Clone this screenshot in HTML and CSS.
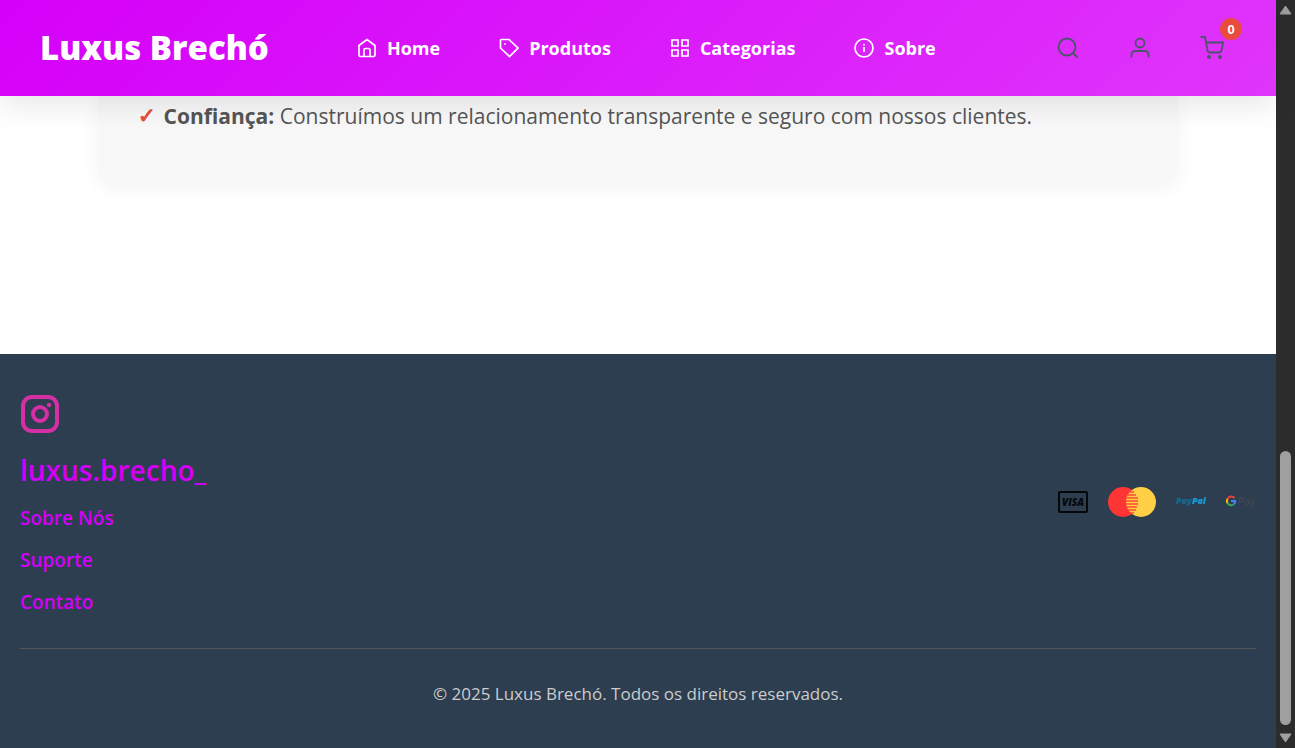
FILE: index.html
```html
<!DOCTYPE html>
<html lang="pt-BR">
<head>
<meta charset="utf-8">
<meta name="viewport" content="width=device-width, initial-scale=1">
<title>Luxus Brechó</title>
<link rel="stylesheet" href="styles.css">
</head>
<body>
<div class="page">
  <header class="header">
    <a class="logo" href="#">Luxus Brechó</a>
    <nav class="nav">
      <a class="nav-link" href="#"><svg class="nav-icon" viewBox="0 0 20 20"><path d="M2 7.500 10 1.500 18 7.500V17Q18 18.500 16.500 18.500H3.500Q2 18.500 2 17ZM7 18.500V12Q7 10.500 8.500 10.500H11.500Q13 10.500 13 12V18.500"/></svg>Home</a>
      <a class="nav-link" href="#"><svg class="nav-icon" viewBox="0 0 20 20"><path d="M1.500 2.500V10L10.500 18.500 19 10 11 2.500Q10.500 1.500 9.500 1.500H2.500Q1.500 1.500 1.500 2.500Z"/><circle class="solid" cx="6" cy="6" r="1"/></svg>Produtos</a>
      <a class="nav-link" href="#"><svg class="nav-icon" viewBox="0 0 20 20"><path d="M2 2H8V8H2ZM12 2H18V8H12ZM2 12H8V18H2ZM12 12H18V18H12Z"/></svg>Categorias</a>
      <a class="nav-link" href="#"><svg class="nav-icon" viewBox="0 0 20 20"><circle cx="10" cy="10" r="9"/><path d="M10 9V14M10 6V7.500"/></svg>Sobre</a>
    </nav>
    <div class="actions">
      <button class="action" type="button" aria-label="Buscar"><svg class="action-icon" viewBox="0 0 24 24"><circle cx="11" cy="11" r="8.500"/><path d="M17 17 21.500 21.500"/></svg></button>
      <button class="action" type="button" aria-label="Conta"><svg class="action-icon" viewBox="0 0 24 24"><circle cx="12" cy="7" r="4.500"/><path d="M3.500 21.500V19Q3.500 15 7.500 15H16.500Q20.500 15 20.500 19V21.500"/></svg></button>
      <button class="action" type="button" aria-label="Carrinho"><svg class="action-icon" viewBox="0 0 24 24"><path d="M.5 1H5L7.500 14.500Q7.800 16.500 10 16.500H19Q21 16.500 21.500 14.500L23 6.500H6"/><circle class="dot" cx="9" cy="21" r="2"/><circle class="dot" cx="20" cy="21" r="2"/></svg><span class="badge">0</span></button>
    </div>
  </header>
  <main class="main">
    <section class="card">
      <ul class="values"><li class="value"><span class="check">✓</span><p class="value-text"><strong>Confiança:</strong> Construímos um relacionamento transparente e seguro com nossos clientes.</p></li></ul>
    </section>
  </main>
  <footer class="footer">
    <div class="footer-top">
      <div class="footer-links">
        <a class="instagram" href="#"><svg class="instagram-icon" viewBox="0 0 40 40"><rect x="3" y="3" width="34" height="34" rx="9"/><circle cx="20" cy="20" r="7"/><circle class="lens" cx="29" cy="11" r="2.200"/></svg><span>luxus.brecho_</span></a>
        <a class="footer-link" href="#">Sobre Nós</a>
        <a class="footer-link" href="#">Suporte</a>
        <a class="footer-link" href="#">Contato</a>
      </div>
      <div class="payments">
        <svg class="pay" viewBox="0 0 30 30" role="img" aria-label="Visa"><rect x="1" y="5" width="28" height="20" rx="1" fill="none" stroke="#050709" stroke-width="2"/><text class="visa" x="15" y="19" text-anchor="middle">VISA</text></svg>
        <svg class="pay-wide" viewBox="0 0 48 30" role="img" aria-label="Mastercard"><circle cx="15" cy="15" r="15" fill="#ff3434"/><circle cx="33" cy="15" r="15" fill="#ffcf45"/><path d="M22 5H26M20 8H28M19 11H30M18 14H30M18 17H30M19 20H29M20 23H28M22 26H26" stroke="#ff4a34" stroke-width="1.500"/></svg>
        <svg class="pay" viewBox="0 0 30 30" role="img" aria-label="PayPal"><text class="paypal" x="0" y="17"><tspan fill="#146990">Pay</tspan><tspan fill="#189bd0">Pal</tspan></text></svg>
        <svg class="pay" viewBox="0 0 30 30" role="img" aria-label="Google Pay"><g fill="none" stroke-width="2"><path d="M8.500 11A4.200 4.200 0 0 0 1.500 12" stroke="#ea4335"/><path d="M1.500 12A4.200 4.200 0 0 0 1.500 16" stroke="#fbbc04"/><path d="M1.500 16A4.200 4.200 0 0 0 7.500 17.500" stroke="#34a853"/><path d="M7.500 17.500Q9.500 16 9.200 14H5" stroke="#4285f4"/></g><text class="gpay" x="12" y="18">Pay</text></svg>
      </div>
    </div>
    <p class="copyright">© 2025 Luxus Brechó. Todos os direitos reservados.</p>
  </footer>
</div>
<div class="scrollbar" aria-hidden="true">
  <svg class="arrow" viewBox="0 0 13 10"><path d="M6.500 1 12 9H1Z"/></svg>
  <div class="track"><div class="thumb"></div></div>
  <svg class="arrow" viewBox="0 0 13 10"><path d="M1 1H12L6.500 9Z"/></svg>
</div>
</body>
</html>
```
FILE: styles.css
```css
* { box-sizing: border-box; }
body {
  margin: 0;
  display: flex;
  min-height: 100vh;
  background: #fff;
  font-family: "Segoe UI", "Open Sans", "Noto Sans", sans-serif;
}
a { text-decoration: none; }
p, ul { margin: 0; padding: 0; }
.page { flex: 1; min-width: 0; display: flex; flex-direction: column; }

.header {
  position: relative;
  z-index: 1;
  display: flex;
  align-items: center;
  padding: 24px 40px;
  background: linear-gradient(135deg, #d500f9, #df35fb);
  box-shadow: 0 8px 32px rgba(0, 0, 0, .1);
}
.logo { color: #fff; font-size: 33px; font-weight: 800; line-height: 48px; white-space: nowrap; }
.nav { display: flex; gap: 59px; margin-left: 88px; }
.nav-link { display: flex; align-items: center; gap: 10px; color: #fff; font-size: 18px; font-weight: 700; line-height: 24px; }
.nav-icon { width: 20px; height: 20px; fill: none; stroke: #fff; stroke-width: 1.7; }
.solid { fill: #fff; stroke: none; }
.actions { display: flex; gap: 24px; margin-left: auto; }
.action {
  position: relative;
  display: grid;
  place-items: center;
  width: 48px;
  height: 48px;
  padding: 0;
  border: 0;
  background: none;
}
.action-icon { width: 24px; height: 24px; fill: none; stroke: #4a5568; stroke-width: 1.8; }
.dot { fill: #4a5568; stroke: none; }
.badge {
  position: absolute;
  top: -6px;
  right: -6px;
  width: 22px;
  height: 22px;
  border-radius: 50%;
  background: #e74c3c;
  color: #fff;
  font-size: 13px;
  font-weight: 700;
  line-height: 24px;
  text-align: center;
}

.main { flex: 1; padding: 0 20px 168px; }
.card {
  max-width: 1080px;
  margin: 0 auto;
  padding: 0 40px 48px;
  border-radius: 0 0 15px 15px;
  background: #f8f8f8;
  box-shadow: 0 4px 20px rgba(0, 0, 0, .05);
}
.values { list-style: none; }
.value { display: flex; gap: 8px; color: #555; font-size: 21px; line-height: 40px; }
.check { color: #e74c3c; font-family: "DejaVu Sans", sans-serif; -webkit-text-stroke: 1px #e74c3c; }

.footer { padding: 40px 20px 41px; background: #2c3e50; }
.footer-top { display: flex; align-items: center; justify-content: space-between; padding-bottom: 32px; }
.footer-links { display: flex; flex-direction: column; align-items: flex-start; gap: 14px; }
.instagram { display: flex; flex-direction: column; gap: 16px; color: #d500f9; font-size: 28px; font-weight: 600; line-height: 40px; }
.instagram-icon { width: 40px; height: 40px; fill: none; stroke: #d62fa5; stroke-width: 4; }
.instagram-icon .lens { fill: #d62fa5; stroke: none; }
.footer-link { color: #d500f9; font-size: 19px; font-weight: 600; line-height: 28px; }
.payments { display: flex; align-items: center; gap: 20px; padding-bottom: 6px; }
.pay { width: 30px; height: 30px; }
.pay-wide { width: 48px; height: 30px; }
.visa { font-size: 10px; font-weight: 800; font-style: italic; fill: #050709; }
.paypal { font-size: 9px; font-weight: 800; font-style: italic; }
.gpay { font-size: 10px; fill: #454a50; }
.copyright { padding-top: 32px; border-top: 1px solid #555; color: #ccc; font-size: 17px; line-height: 26px; text-align: center; }

.scrollbar { display: flex; flex-direction: column; align-items: center; width: 19px; padding: 5px 0; background: #2c2c2c; }
.arrow { width: 13px; height: 10px; fill: #9f9f9f; stroke: #9f9f9f; stroke-linejoin: round; }
.track { flex: 1; display: flex; flex-direction: column; justify-content: flex-end; padding: 8px 0; }
.thumb { width: 11px; height: 39%; border-radius: 6px; background: #9f9f9f; }
```
